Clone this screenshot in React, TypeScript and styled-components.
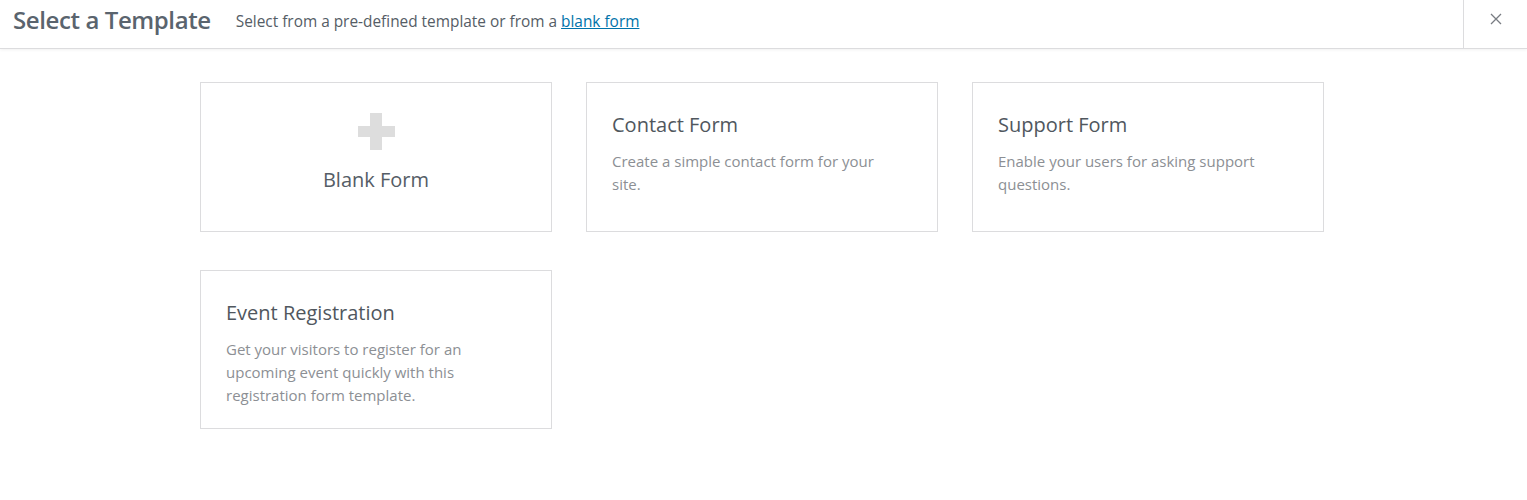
import styled, { createGlobalStyle } from "styled-components";

const GlobalStyle = createGlobalStyle`
  body {
    margin: 0;
    background: #fff;
    font-family: "Open Sans", "Noto Sans", Arial, sans-serif;
  }
`;

const templates = [
  {
    title: "Contact Form",
    description: "Create a simple contact form for your site.",
  },
  {
    title: "Support Form",
    description: "Enable your users for asking support questions.",
  },
  {
    title: "Event Registration",
    description:
      "Get your visitors to register for an upcoming event quickly with this registration form template.",
  },
];

function App() {
  return (
    <>
      <GlobalStyle />
      <Header>
        <HeaderMain>
          <Title>Select a Template</Title>
          <Subtitle>
            Select from a pre-defined template or from a <a href="#">blank form</a>
          </Subtitle>
        </HeaderMain>
        <CloseButton aria-label="Close">
          <svg width="12" height="12" viewBox="0 0 12 12">
            <path d="M1 1L11 11M11 1L1 11" stroke="#787c82" strokeWidth="1.3" />
          </svg>
        </CloseButton>
      </Header>

      <Grid>
        <Card $center>
          <PlusIcon />
          <BlankLabel>Blank Form</BlankLabel>
        </Card>
        {templates.map((t) => (
          <Card key={t.title}>
            <CardTitle>{t.title}</CardTitle>
            <CardText>{t.description}</CardText>
          </Card>
        ))}
      </Grid>
    </>
  );
}

const Header = styled.header`
  display: flex;
  align-items: stretch;
  height: 48px;
  border-bottom: 1px solid #dcdcde;
  box-shadow: 0 1px 3px rgba(0, 0, 0, 0.06);
`;

const HeaderMain = styled.div`
  flex: 1;
  display: flex;
  align-items: center;
  padding: 0 0 9px 13px;
  gap: 25px;
`;

const Title = styled.h1`
  margin: 0;
  font-size: 24px;
  font-weight: 600;
  color: #5a646e;
  letter-spacing: -0.4px;
`;

const Subtitle = styled.p`
  margin: 4px 0 0;
  font-size: 15.4px;
  color: #555d66;

  a {
    color: #0073aa;
    text-decoration: underline;
  }
`;

const CloseButton = styled.button`
  width: 64px;
  border: none;
  border-left: 1px solid #dcdcde;
  background: none;
  display: flex;
  align-items: flex-start;
  justify-content: center;
  padding-top: 13px;
  cursor: pointer;
`;

const Grid = styled.div`
  display: grid;
  grid-template-columns: repeat(3, 352px);
  column-gap: 34px;
  row-gap: 38px;
  padding: 33px 0 0 200px;
`;

const Card = styled.div<{ $center?: boolean }>`
  box-sizing: border-box;
  min-height: 150px;
  border: 1px solid #dcdcde;
  padding: ${(p) => (p.$center ? "30px 25px 36px" : "28px 25px 21px")};
  display: flex;
  flex-direction: column;
  align-items: ${(p) => (p.$center ? "center" : "flex-start")};
`;

const PlusIcon = styled.span`
  position: relative;
  width: 37px;
  height: 37px;

  &::before,
  &::after {
    content: "";
    position: absolute;
    background: #dddddd;
  }
  &::before {
    left: 12px;
    top: 0;
    width: 12px;
    height: 37px;
  }
  &::after {
    left: 0;
    top: 13px;
    width: 37px;
    height: 11px;
  }
`;

const BlankLabel = styled.div`
  margin-top: 16px;
  font-size: 20px;
  color: #555d66;
`;

const CardTitle = styled.h3`
  margin: 0;
  font-size: 20px;
  font-weight: 400;
  line-height: 28px;
  color: #50575e;
`;

const CardText = styled.p`
  margin: 11px 0 0;
  font-size: 15px;
  line-height: 23px;
  color: #8c8f94;
  max-width: 285px;
`;

export default App;
